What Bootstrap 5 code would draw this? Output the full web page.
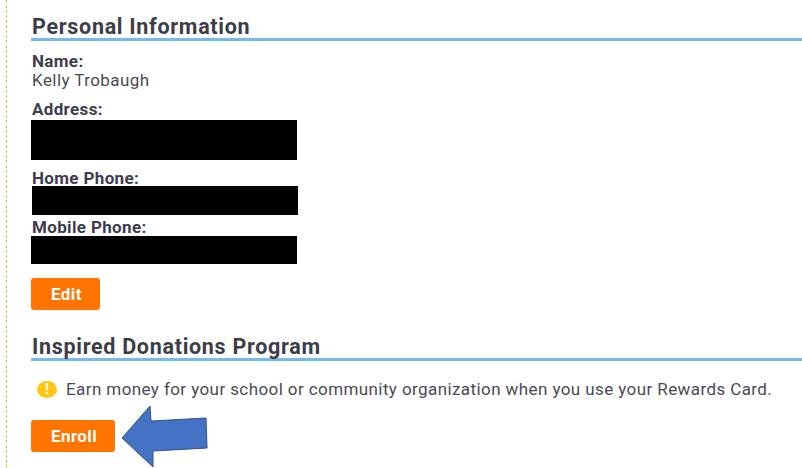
<!DOCTYPE html>
<html lang="en">
<head>
  <meta charset="UTF-8">
  <title>Personal Information</title>
  <link href="https://cdn.jsdelivr.net/npm/bootstrap@5.3.0/dist/css/bootstrap.min.css" rel="stylesheet">
  <style>
    html, body { height: 468px; overflow: hidden; background: #fff; }
    body { font-family: Roboto, "Liberation Sans", sans-serif; color: #4a4a55; font-size: 17px; }
    .acct-page { position: relative; height: 468px; margin-left: 6px; padding: 15px 0 0 24px; border-left: 1px dashed #ffb13d; }
    .acct-title { font-size: 21.5px; font-weight: 700; line-height: 23px; margin: 0; padding-left: 1px; color: #3d3d47; letter-spacing: .7px; border-bottom: 3px solid #74b9f2; }
    .acct-label { font-weight: 700; line-height: 17px; padding-left: 1px; color: #3d3d4f; letter-spacing: .35px; }
    .acct-value { line-height: 18px; padding-left: 1px; letter-spacing: .43px; margin-top: 1px; margin-bottom: 12px; }
    .acct-hidden { width: 266px; background: #000; }
    .h-address { height: 40px; margin-top: 2px; margin-bottom: 10px; }
    .h-home { height: 29px; margin-top: -1px; margin-left: 1px; margin-bottom: 4px; }
    .h-mobile { height: 28px; margin-bottom: 14px; }
    .acct-first { margin-top: 12px; }
    .acct-btn { background: #ff7300; border: 0; color: #fff; font-weight: 700; font-size: 17px; letter-spacing: .4px; line-height: 18px; border-radius: 3px; padding: 7px 18px 7px 20px; height: 32px; }
    .acct-btn:hover { background: #ff7300; color: #fff; }
    .acct-title2 { margin-top: 25px; }
    .acct-note { letter-spacing: .41px; line-height: 20px; margin-top: 18px; margin-bottom: 21px; column-gap: 9px; }
    .acct-alert { width: 20px; height: 17px; border-radius: 50%; background: #fdc713; color: #fff; font-weight: 700; font-size: 14px; line-height: 17px; text-align: center; margin-left: 6px; flex: none; }
    .acct-arrow { position: absolute; left: 108px; top: 405px; }
  </style>
</head>
<body>
  <div class="acct-page">
    <h2 class="acct-title">Personal Information</h2>

    <div class="acct-label acct-first">Name:</div>
    <div class="acct-value">Kelly Trobaugh</div>

    <div class="acct-label">Address:</div>
    <div class="acct-hidden h-address"></div>

    <div class="acct-label">Home Phone:</div>
    <div class="acct-hidden h-home"></div>

    <div class="acct-label">Mobile Phone:</div>
    <div class="acct-hidden h-mobile"></div>

    <button type="button" class="btn acct-btn d-block">Edit</button>

    <h2 class="acct-title acct-title2">Inspired Donations Program</h2>

    <div class="d-flex align-items-center acct-note">
      <span class="acct-alert">!</span>
      <span>Earn money for your school or community organization when you use your Rewards Card.</span>
    </div>

    <button type="button" class="btn acct-btn d-block">Enroll</button>

    <svg class="acct-arrow" width="94" height="63" viewBox="0 0 94 63">
      <polygon points="7,33 35,1 36,16 91,13 92,43 38,46 38,62" fill="#4472c4" stroke="#2f528f" stroke-width="1"/>
    </svg>
  </div>
  <script src="https://cdn.jsdelivr.net/npm/bootstrap@5.3.0/dist/js/bootstrap.bundle.min.js"></script>
</body>
</html>
